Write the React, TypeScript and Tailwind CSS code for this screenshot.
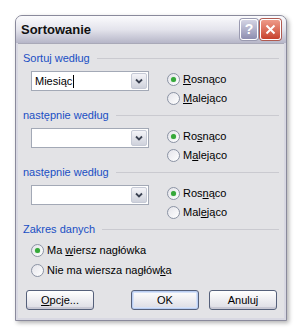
import React from 'react'

const font = { fontFamily: '"Liberation Sans", Arial, sans-serif' }

function Radio({ checked, children }: { checked?: boolean; children: React.ReactNode }) {
  return (
    <div className="flex items-center h-[19px] gap-[3px]">
      <div className="w-[13px] h-[13px] rounded-full border border-[#8b93a4] bg-gradient-to-br from-[#e4e4ea] to-[#ffffff] flex items-center justify-center">
        {checked && <div className="w-[5px] h-[5px] rounded-full bg-[#36a83a] shadow-[0_0_1px_#7ccf7e]" />}
      </div>
      <span className="text-[11px] text-black leading-[13px]">{children}</span>
    </div>
  )
}

function Combo({ value }: { value?: string }) {
  return (
    <div className="w-[118px] h-[20px] border border-[#a3a9b6] bg-white flex items-stretch">
      <div className="flex-1 flex items-center pl-[3px] text-[11px] text-black">
        {value}
        {value && <span className="w-px h-[13px] bg-black ml-[1px]" />}
      </div>
      <div className="w-[16px] m-[1px] rounded-[2px] border border-[#c6cad6] bg-gradient-to-b from-[#f4f4f8] to-[#cfd2dc] flex items-center justify-center">
        <svg width="8" height="6" viewBox="0 0 8 6">
          <path d="M1 1.5 L4 4.5 L7 1.5" stroke="#3b4252" strokeWidth="1.8" fill="none" />
        </svg>
      </div>
    </div>
  )
}

function GroupLabel({ children }: { children: React.ReactNode }) {
  return (
    <div className="flex items-center h-[14px]">
      <span className="text-[11px] text-[#1a4fc4] leading-[14px]">{children}</span>
      <div className="flex-1 ml-[7px] border-t border-[#cacad0]" />
    </div>
  )
}

function SortGroup({ label, value, up, down }: { label: string; value?: string; up: React.ReactNode; down: React.ReactNode }) {
  return (
    <div className="h-[57px]">
      <GroupLabel>{label}</GroupLabel>
      <div className="flex mt-[5px]">
        <div className="ml-[8px] mt-[1px]">
          <Combo value={value} />
        </div>
        <div className="ml-[18px] flex flex-col">
          <Radio checked>{up}</Radio>
          <Radio>{down}</Radio>
        </div>
      </div>
    </div>
  )
}

function Button({ children, primary }: { children: React.ReactNode; primary?: boolean }) {
  return (
    <div
      className={
        'w-[68px] h-[20px] rounded-[3px] border border-[#55607a] bg-gradient-to-b from-[#ffffff] to-[#dcdce4] flex items-center justify-center text-[11px] text-black ' +
        (primary ? 'shadow-[inset_0_0_0_1px_#b9cdf2,inset_0_0_0_2px_#d6e2f8]' : 'shadow-[inset_0_-2px_0_#c8c8d4]')
      }
    >
      {children}
    </div>
  )
}

export default function App() {
  return (
    <div className="w-[301px] h-[335px] bg-white pt-[15px] pl-[15px]" style={font}>
      <div className="w-[272px] h-[306px] rounded-t-[7px] border border-[#8a8a9c] bg-[#d8d8e2] shadow-[2px_2px_4px_rgba(0,0,0,0.3)] flex flex-col overflow-hidden">
        {/* Title bar */}
        <div className="h-[27px] flex items-center pl-[5px] pr-[5px] bg-gradient-to-b from-[#fbfbfd] via-[#e4e4ec] to-[#b6b6c8]">
          <span className="flex-1 text-[13px] font-bold text-[#111]">Sortowanie</span>
          <div className="w-[18px] h-[21px] rounded-[3px] border border-white bg-gradient-to-b from-[#d4d4e4] to-[#8e8eb0] shadow-[0_0_0_1px_#9a9ab0] flex items-center justify-center text-white text-[14px] font-bold">
            ?
          </div>
          <div className="w-[21px] h-[21px] ml-[2px] rounded-[3px] border border-white bg-gradient-to-b from-[#ee9a88] to-[#c6402c] shadow-[0_0_0_1px_#b05a50] flex items-center justify-center">
            <svg width="11" height="11" viewBox="0 0 11 11">
              <path d="M1.5 1.5 L9.5 9.5 M9.5 1.5 L1.5 9.5" stroke="white" strokeWidth="2" />
            </svg>
          </div>
        </div>

        {/* Body */}
        <div className="flex-1 mx-[2px] mb-[2px] bg-[#e3e3e6] border-t border-[#a9a9b8] pt-[7px] pl-[5px] pr-[5px]">
          <SortGroup
            label="Sortuj według"
            value="Miesiąc"
            up={<><u>R</u>osnąco</>}
            down={<><u>M</u>alejąco</>}
          />
          <SortGroup
            label="następnie według"
            up={<>Ro<u>s</u>nąco</>}
            down={<>M<u>a</u>lejąco</>}
          />
          <SortGroup
            label="następnie według"
            up={<>Ros<u>n</u>ąco</>}
            down={<>Mal<u>e</u>jąco</>}
          />

          <GroupLabel>Zakres danych</GroupLabel>
          <div className="ml-[8px] mt-[4px] flex flex-col">
            <div className="h-[20px] flex items-center">
              <Radio checked>Ma <u>w</u>iersz nagłówka</Radio>
            </div>
            <div className="h-[20px] flex items-center">
              <Radio>Nie ma wiersza nagłów<u>k</u>a</Radio>
            </div>
          </div>

          <div className="flex mt-[10px] ml-[3px]">
            <Button><u>O</u>pcje...</Button>
            <div className="flex-1" />
            <Button primary>OK</Button>
            <div className="w-[10px]" />
            <div className="mr-[2px]">
              <Button>Anuluj</Button>
            </div>
          </div>
        </div>
      </div>
    </div>
  )
}
